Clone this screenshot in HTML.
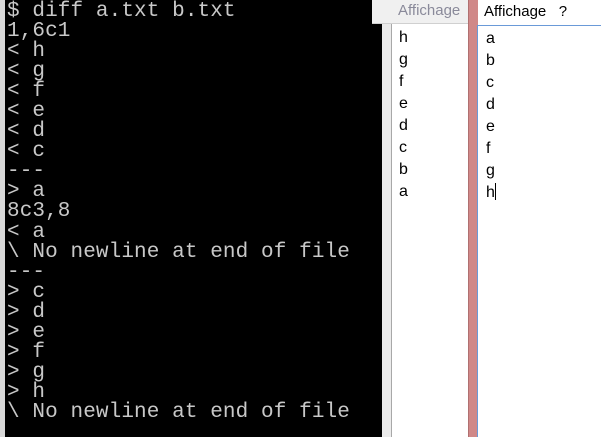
<!DOCTYPE html>
<html><head><style>
body{margin:0;width:601px;height:437px;position:relative;overflow:hidden;background:#fff;font-family:"Liberation Sans",sans-serif}
#term{position:absolute;left:0;top:0;width:382px;height:437px;background:#000;overflow:hidden}
#strip{position:absolute;left:0;top:0;width:5px;height:437px;background:#d8d8d8}
pre{position:absolute;left:7px;top:2px;margin:0;font-family:"Liberation Mono",monospace;font-size:21px;line-height:20.05px;color:#c8c8c8;letter-spacing:0.1px}
#lp{position:absolute;left:382px;top:0;width:86px;height:437px;background:#ebebeb}
#lh{position:absolute;left:372px;top:0;width:96px;height:23px;background:#f0f0f0;border-bottom:1px solid #d0d0d0}
#lh span{position:absolute;left:26px;top:2px;font-size:15px;color:#8a8a9a}
#lb{position:absolute;left:391px;top:24px;width:77px;height:413px;background:#fff;border-left:1px solid #a8a8a8}
.it{position:absolute;font-size:16px;line-height:22px;color:#000}
#bar{position:absolute;left:468px;top:0;width:9px;height:437px;background:#d08888;border-left:1px solid #b07070}
#rh{position:absolute;left:478px;top:0;width:123px;height:25px;background:#fff;border-bottom:1px solid #6a9ad8}
#rh span{position:absolute;left:6px;top:3px;font-size:15px;color:#000}
#rl{position:absolute;left:477px;top:25px;width:1px;height:412px;background:#6a9ad8}
</style></head><body>
<div id="term"><div id="strip"></div><pre>$ diff a.txt b.txt
1,6c1
&lt; h
&lt; g
&lt; f
&lt; e
&lt; d
&lt; c
---
&gt; a
8c3,8
&lt; a
\ No newline at end of file
---
&gt; c
&gt; d
&gt; e
&gt; f
&gt; g
&gt; h
\ No newline at end of file</pre></div>
<div id="lp"></div>
<div id="lh"><span>Affichage</span></div>
<div id="lb"><div class="it" style="left:7px;top:3px">h<br>g<br>f<br>e<br>d<br>c<br>b<br>a</div></div>
<div id="bar"></div>
<div id="rh"><span>Affichage &nbsp; ?</span></div>
<div id="rl"></div>
<div class="it" style="left:486px;top:28px">a<br>b<br>c<br>d<br>e<br>f<br>g<br>h<span style="display:inline-block;width:1px;height:17px;background:#000;vertical-align:-3px"></span></div>
</body></html>
